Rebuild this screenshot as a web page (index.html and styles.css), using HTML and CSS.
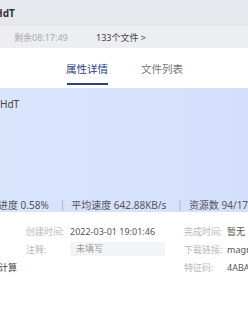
FILE: index.html
```html
<!DOCTYPE html>
<html lang="zh-CN">
<head>
  <meta charset="UTF-8">
  <meta name="viewport" content="width=device-width, initial-scale=1.0">
  <title>任务详情</title>
  <link rel="stylesheet" href="styles.css">
</head>
<body>

  <!-- 任务标题 -->
  <div class="header">
    <span class="title">HdT</span>
  </div>
  <div class="subbar">
    <span class="remain">剩余08:17:49</span>
    <span class="files">133个文件 &gt;</span>
  </div>

  <!-- 标签页 -->
  <div class="tabs">
    <span class="tab active">属性详情</span>
    <span class="tab">文件列表</span>
  </div>

  <div class="panel">
    <div class="panel-name">HdT</div>
    <div class="stats">
      <span>下载进度 0.58%</span>
      <span class="sep">|</span>
      <span>平均速度 642.88KB/s</span>
      <span class="sep">|</span>
      <span>资源数 94/172</span>
    </div>
  </div>

  <div class="details">
    <span></span>
    <span class="label">创建时间:</span>
    <span class="value">2022-03-01 19:01:46</span>
    <span class="label">完成时间:</span>
    <span class="value">暂无</span>

    <span></span>
    <span class="label">注释:</span>
    <span class="value"><span class="note">未填写</span></span>
    <span class="label">下载链接:</span>
    <span class="value">magnet:?xt=urn:btih:4ABA</span>

    <span class="calc">计算</span>
    <span></span>
    <span></span>
    <span class="label">特征码:</span>
    <span class="value">4ABA2F1C9E0D</span>
  </div>

</body>
</html>
```

FILE: styles.css
```css
body {
  margin: 0;
  width: 248px;
  height: 333px;
  overflow: hidden;
  font-family: "Noto Sans", "Noto Sans CJK SC", sans-serif;
  background: #fff;
  color: #444;
}
.header {
  height: 26px;
  background: #e6e8ed;
  display: flex;
  align-items: center;
}
.title {
  margin-left: -5px;
  font-size: 10px;
  font-weight: bold;
  color: #333;
}
.subbar {
  height: 22px;
  background: #eceef1;
  display: flex;
  align-items: center;
  font-size: 9px;
}
.remain {
  margin-left: 14px;
  width: 82px;
  color: #aaa;
}
.files {
  color: #444;
}
.tabs {
  height: 40px;
  display: flex;
  align-items: center;
  padding-left: 66px;
  gap: 33px;
  font-size: 10.5px;
}
.tab {
  color: #777;
  position: relative;
}
.tab.active {
  color: #2b3e86;
}
.tab.active::after {
  content: "";
  position: absolute;
  left: 1px;
  right: 0;
  bottom: -9px;
  height: 2px;
  background: #2b3e86;
}
.panel {
  height: 124px;
  background: linear-gradient(90deg, #d9e5fd, #d4e0fb);
  display: flex;
  flex-direction: column;
  justify-content: space-between;
}
.panel-name {
  margin-top: 9px;
  font-size: 10px;
  color: #444;
}
.stats {
  margin-left: -22px;
  margin-bottom: 1px;
  height: 14px;
  display: flex;
  align-items: center;
  gap: 5px;
  white-space: nowrap;
  font-size: 10px;
  color: #555;
}
.stats .sep {
  color: #aaa;
  margin: 0 1px 0 6px;
}
.details {
  margin-top: 10px;
  display: grid;
  grid-template-columns: 26px 44px 114px 43px 1fr;
  grid-auto-rows: 18px;
  align-items: center;
  font-size: 9px;
  white-space: nowrap;
}
.label {
  color: #b8b8b8;
}
.value {
  color: #555;
  overflow: hidden;
}
.note {
  display: block;
  width: 89px;
  height: 14px;
  line-height: 14px;
  padding-left: 6px;
  background: #f3f4f6;
  color: #999;
}
.calc {
  margin-left: -1px;
  color: #444;
}
```
